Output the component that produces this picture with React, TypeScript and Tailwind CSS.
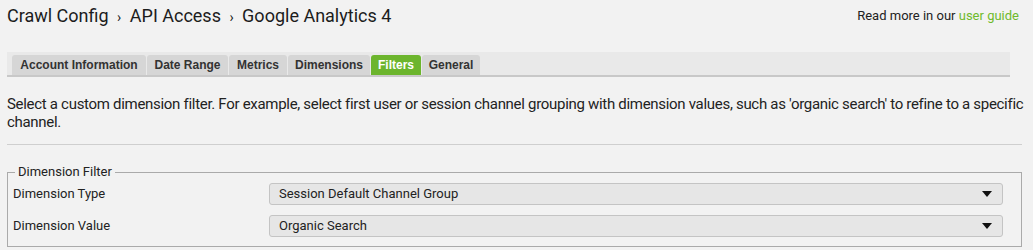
import React from 'react';

const tabs = [
  { label: 'Account Information', w: 'w-[134px]' },
  { label: 'Date Range', w: 'w-[81px]' },
  { label: 'Metrics', w: 'w-[58px]' },
  { label: 'Dimensions', w: 'w-[82px]' },
  { label: 'Filters', w: 'w-[50px]' },
  { label: 'General', w: 'w-[58px]' },
];

const SelectBox: React.FC<{ value: string }> = ({ value }) => (
  <div className="flex-1 h-[22px] bg-[#e6e6e6] border border-[#c4c4c4] rounded-[3px] flex items-center justify-between pl-[9px] pr-[10px] text-[13px] text-[#222]">
    <span>{value}</span>
    <svg width="10" height="6" viewBox="0 0 10 6">
      <path d="M0 0 L10 0 L5 6 Z" fill="#111" />
    </svg>
  </div>
);

const App: React.FC = () => {
  return (
    <div className="w-[1033px] h-[250px] bg-[#f2f2f2] overflow-hidden font-['Roboto',sans-serif] text-[#222]">
      <div className="flex items-start justify-between pl-[7px] pr-[14px] pt-[4px] h-[28px]">
        <h1 className="text-[18px] leading-[24px] text-[#1c1c1c]">
          Crawl Config <span className="text-[14px] px-[4px]">›</span> API Access <span className="text-[14px] px-[4px]">›</span> Google Analytics 4
        </h1>
        <p className="text-[13px] leading-[24px]">
          Read more in our <span className="text-[#6fba2c]">user guide</span>
        </p>
      </div>

      <div className="mx-[7px] mt-[24px] w-[1003px] bg-[#e9e9e9] border-b-2 border-[#c8c8c8] flex items-end gap-[1px] pl-[5px] pt-[3px]">
        {tabs.map((t) => (
          <div
            key={t.label}
            className={
              t.label === 'Filters'
                ? `${t.w} h-[20px] rounded-t-[3px] bg-[#6cb52d] text-white text-center whitespace-nowrap font-bold text-[12px] leading-[20px] font-['Liberation_Sans',sans-serif]`
                : `${t.w} h-[20px] rounded-t-[3px] bg-[#d6d6d6] text-[#333] text-center whitespace-nowrap font-bold text-[12px] leading-[20px] font-['Liberation_Sans',sans-serif]`
            }
          >
            {t.label}
          </div>
        ))}
      </div>

      <p className="mx-[7px] mt-[18px] text-[15px] leading-[18px] tracking-[-0.3px] text-[#222]">
        Select a custom dimension filter. For example, select first user or session channel grouping with dimension values, such as 'organic search' to refine to a specific channel.
      </p>

      <div className="mx-[7px] mt-[13px] w-[1015px] border-t border-[#cfcfcf]" />

      <fieldset className="mx-[7px] mt-[19px] w-[1015px] border border-[#aaa] pl-[5px] pr-[18px] pb-[9px] pt-0">
        <legend className="ml-[2px] px-[3px] text-[13px] leading-[16px]">Dimension Filter</legend>
        <div className="flex items-center mt-[3px]">
          <span className="w-[256px] text-[13px]">Dimension Type</span>
          <SelectBox value="Session Default Channel Group" />
        </div>
        <div className="flex items-center mt-[10px]">
          <span className="w-[256px] text-[13px]">Dimension Value</span>
          <SelectBox value="Organic Search" />
        </div>
      </fieldset>
    </div>
  );
};

export default App;
